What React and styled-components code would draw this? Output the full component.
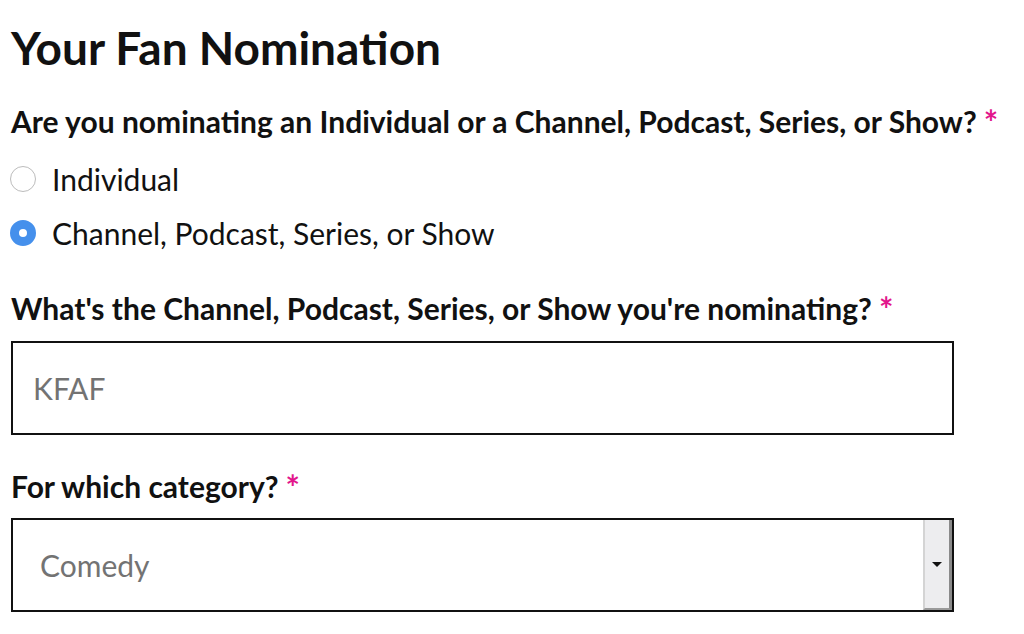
import styled, { createGlobalStyle } from "styled-components";

const Global = createGlobalStyle`
  body {
    margin: 0;
    background: #fff;
    font-family: Lato, "Open Sans", sans-serif;
    color: #111;
  }
`;

const Page = styled.div`
  padding: 21px 0 0 11px;
  width: 943px;
`;

const Title = styled.h1`
  font-size: 46px;
  font-weight: bold;
  margin: 0 0 26px 0;
  line-height: 54px;
`;

const Field = styled.div`
  margin-bottom: ${(p) => p.after || 31}px;
`;

const Label = styled.div`
  font-size: 30px;
  font-weight: bold;
  line-height: 40px;
  white-space: nowrap;
  margin-bottom: ${(p) => p.gap || 13}px;

  span {
    color: #e2168c;
    margin-left: 7px;
    font-size: 34px;
    line-height: 34px;
    vertical-align: top;
    position: relative;
    top: 4px;
  }
`;

const RadioRow = styled.label`
  display: flex;
  align-items: center;
  gap: 16px;
  font-size: 30px;
  height: 40px;
  margin-top: ${(p) => p.top || 14}px;
`;

const Dot = styled.div`
  width: 26px;
  height: 26px;
  border-radius: 50%;
  box-sizing: border-box;
  margin-left: -1px;
  border: ${(p) => (p.on ? "9px solid #4590ec" : "1.5px solid #bcbcbc")};
  background: #fff;
`;

const Box = styled.div`
  height: 94px;
  border: 2px solid #111;
  box-sizing: border-box;
  display: flex;
  align-items: center;
  font-size: 30px;
  color: #737373;
  padding-left: ${(p) => p.pad}px;
`;

const SelectBox = styled(Box)`
  justify-content: space-between;
  padding-right: 0;
  align-items: stretch;
`;

const SelectText = styled.div`
  display: flex;
  align-items: center;
`;

const Arrow = styled.div`
  width: 29px;
  background: #ededef;
  border-left: 2px solid #d4d4d4;
  border-bottom: 2px solid #9a9a9a;
  border-right: 3px solid #8a8a8a;
  display: flex;
  align-items: center;
  justify-content: center;
  box-sizing: border-box;
`;

const Tri = styled.div`
  width: 0;
  height: 0;
  border-left: 5px solid transparent;
  border-right: 5px solid transparent;
  border-top: 5px solid #111;
`;

export default function App() {
  return (
    <>
      <Global />
      <Page>
        <Title>Your Fan Nomination</Title>
        <Field after={35}>
          <Label gap={0}>
            Are you nominating an Individual or a Channel, Podcast, Series, or Show?<span>*</span>
          </Label>
          <RadioRow top={18}>
            <Dot />
            Individual
          </RadioRow>
          <RadioRow>
            <Dot on />
            Channel, Podcast, Series, or Show
          </RadioRow>
        </Field>
        <Field>
          <Label>
            What's the Channel, Podcast, Series, or Show you're nominating?<span>*</span>
          </Label>
          <Box pad={20}>KFAF</Box>
        </Field>
        <Field>
          <Label gap={12}>
            For which category?<span>*</span>
          </Label>
          <SelectBox pad={27}>
            <SelectText>Comedy</SelectText>
            <Arrow>
              <Tri />
            </Arrow>
          </SelectBox>
        </Field>
      </Page>
    </>
  );
}
